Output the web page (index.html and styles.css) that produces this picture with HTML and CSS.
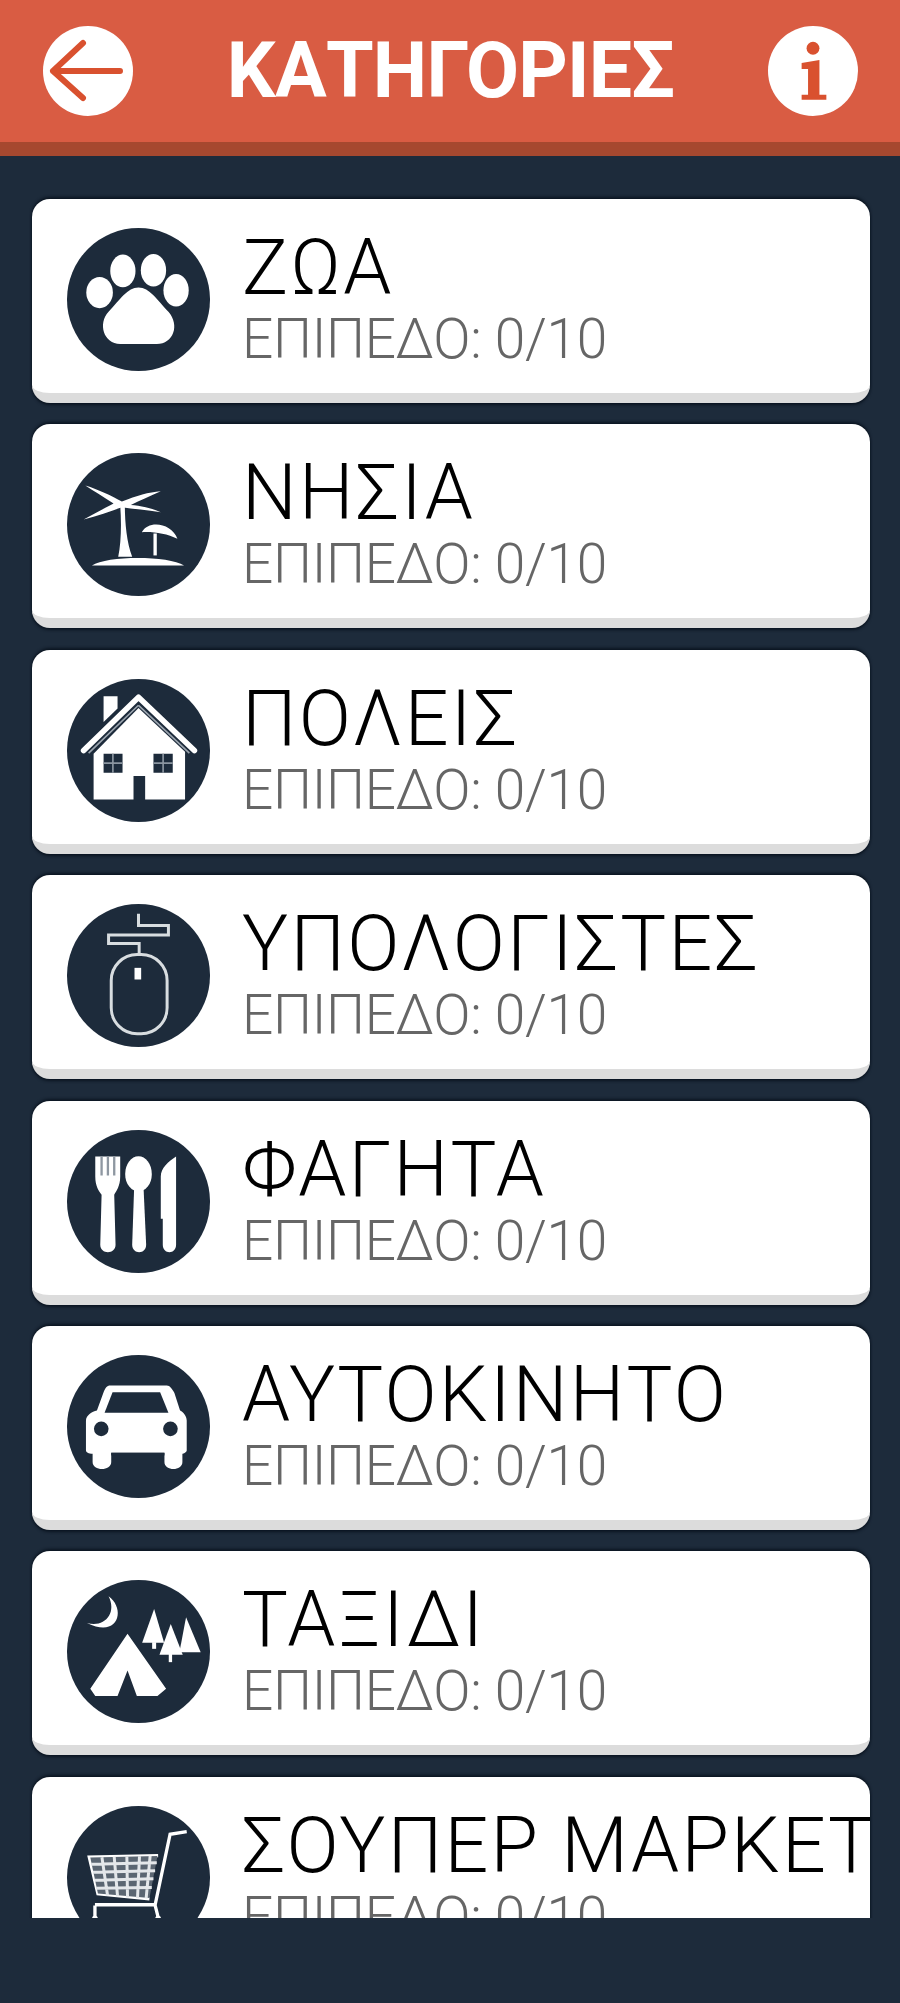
FILE: index.html
```html
<!DOCTYPE html>
<html lang="el">
<head>
<meta charset="utf-8">
<title>ΚΑΤΗΓΟΡΙΕΣ</title>
<link rel="stylesheet" href="styles.css">
</head>
<body>
<header class="topbar">
  <svg class="round-btn" viewBox="0 0 90 92"><circle cx="45" cy="46" r="45" fill="#fff"/><path class="arrow" d="M40 18 L10 46 L40 73 M10 46 H77"/></svg>
  <h1 class="page-title">ΚΑΤΗΓΟΡΙΕΣ</h1>
  <svg class="round-btn" viewBox="17 25 91 92"><circle cx="62.5" cy="71" r="45.5" fill="#fff"/><circle cx="62.5" cy="48" r="6.5" fill="#d9512f"/><path fill="#d9512f" d="M51 63 L69 60 V95 H76 V100 H51 V95 H57.500 V69 H51Z"/></svg>
</header>
<main class="list">
  <section class="card">
    <svg class="icon" viewBox="80 53 430 430"><circle cx="295" cy="268" r="215" class="disc"/><g class="w"><ellipse cx="178" cy="247" rx="40" ry="47"/><ellipse cx="248" cy="182" rx="38" ry="49"/><ellipse cx="340" cy="180" rx="38" ry="49"/><ellipse cx="408" cy="240" rx="38" ry="49"/><path d="M295 232 C262 232 240 268 205 305 C172 340 190 402 240 402 L350 402 C400 402 420 345 385 305 C350 268 328 232 295 232Z"/></g></svg>
    <div class="text"><h2 class="name">ΖΩΑ</h2><p class="level">ΕΠΙΠΕΔΟ: 0/10</p></div>
  </section>
  <section class="card">
    <svg class="icon" viewBox="80 40 430 430"><circle cx="295" cy="255" r="215" class="disc"/><g class="w"><path d="M135 138 C175 150 215 170 245 186 C290 168 325 158 362 155 C330 170 300 182 272 196 C300 198 335 205 362 218 C320 212 280 208 245 203 C210 215 170 230 130 240 C165 220 195 205 220 192 C190 172 160 155 135 138Z"/><path d="M240 198 H254 C254 250 260 310 276 352 H234 C243 310 244 250 240 198Z"/><path d="M155 378 C200 348 385 348 432 378Z"/><path d="M305 278 C325 240 395 250 412 298 C380 282 340 276 305 278Z"/><rect x="340" y="282" width="10" height="66"/></g></svg>
    <div class="text"><h2 class="name">ΝΗΣΙΑ</h2><p class="level">ΕΠΙΠΕΔΟ: 0/10</p></div>
  </section>
  <section class="card">
    <svg class="icon" viewBox="80 53 430 430"><circle cx="295" cy="268" r="215" class="disc"/><g class="w"><path d="M190 105 H232 V142 L190 182Z"/><path d="M160 278 L295 140 L435 272 V415 H160Z"/></g><path d="M130 268 L295 108 L463 268" class="roof"/><path d="M295 132 L145 276 M295 132 L448 276" class="eave"/><path d="M190 278 H247 V335 H190Z M340 278 H398 V335 H340Z M280 345 H315 V420 H280Z" class="d"/><path d="M218 278 V335 M190 306 H247 M369 278 V335 M340 306 H398" class="pane"/></svg>
    <div class="text"><h2 class="name">ΠΟΛΕΙΣ</h2><p class="level">ΕΠΙΠΕΔΟ: 0/10</p></div>
  </section>
  <section class="card">
    <svg class="icon" viewBox="80 53 430 430"><circle cx="295" cy="268" r="215" class="disc"/><g class="wire"><rect x="213" y="205" width="168" height="238" rx="78"/><path d="M295 82 V118 H385 V146 H205 V172 H297 V205"/></g><rect x="283" y="245" width="20" height="35" class="w"/></svg>
    <div class="text"><h2 class="name">ΥΠΟΛΟΓΙΣΤΕΣ</h2><p class="level">ΕΠΙΠΕΔΟ: 0/10</p></div>
  </section>
  <section class="card">
    <svg class="icon" viewBox="80 55 430 430"><circle cx="295" cy="270" r="215" class="disc"/><g class="w"><path d="M165 135 H240 V195 C240 225 228 238 222 250 L226 400 C226 430 180 430 180 400 L184 250 C176 238 165 225 165 195Z"/><ellipse cx="295" cy="187" rx="40" ry="53"/><path d="M282 225 H310 L318 400 C318 430 276 430 276 400Z"/><path d="M408 135 V400 C408 430 368 430 368 400 V322 H362 V195 C362 170 385 150 408 135Z"/></g><path class="tines" d="M184 135 V192 M203 135 V192 M222 135 V192"/></svg>
    <div class="text"><h2 class="name">ΦΑΓΗΤΑ</h2><p class="level">ΕΠΙΠΕΔΟ: 0/10</p></div>
  </section>
  <section class="card">
    <svg class="icon" viewBox="85 58 430 430"><circle cx="300" cy="273" r="215" class="disc"/><path class="w" d="M215 150 H385 C395 150 400 160 408 172 L425 225 C432 228 445 240 445 255 V345 C445 350 435 355 432 355 V380 C432 408 378 408 378 380 V352 H218 V380 C218 408 162 408 162 380 V355 C150 355 142 350 142 345 V255 C142 240 160 228 175 225 L195 170 C200 158 205 150 215 150Z"/><path class="d" d="M222 170 H365 L390 232 H198Z"/><circle class="d" cx="188" cy="280" r="22"/><circle class="d" cx="396" cy="280" r="22"/><rect class="d" x="218" y="352" width="160" height="8"/></svg>
    <div class="text"><h2 class="name">ΑΥΤΟΚΙΝΗΤΟ</h2><p class="level">ΕΠΙΠΕΔΟ: 0/10</p></div>
  </section>
  <section class="card">
    <svg class="icon" viewBox="80 73 430 430"><circle cx="295" cy="288" r="215" class="disc"/><g class="w"><path d="M205 122 C258 160 235 250 140 202 C190 218 232 175 205 122Z"/><path d="M262 235 L378 400 L352 422 H290 L262 345 L232 422 H165 L150 400Z"/><path d="M342 160 L372 262 H306Z"/><rect x="336" y="260" width="12" height="20"/><path d="M392 205 L428 298 H358Z"/><rect x="386" y="295" width="10" height="25"/><path d="M438 185 L482 290 H418Z"/></g></svg>
    <div class="text"><h2 class="name">ΤΑΞΙΔΙ</h2><p class="level">ΕΠΙΠΕΔΟ: 0/10</p></div>
  </section>
  <section class="card">
    <svg class="icon" viewBox="80 53 430 430"><circle cx="295" cy="268" r="215" class="disc"/><g class="wire cart"><path d="M440 130 L390 138 L345 350 H164 M354 202 L147 207 L173 317 L328 332 M164 352 V387 M345 352 L354 387"/></g><path class="basket" d="M150 208 L352 203 L328 330 L173 316Z"/><path class="grid" d="M153 228 L350 224 M158 252 L345 248 M163 276 L340 272 M168 300 L335 298 M185 207 L202 322 M222 206 L232 325 M260 205 L262 328 M298 204 L292 330 M330 203 L318 331"/><circle class="w" cx="164" cy="392" r="9"/><circle class="w" cx="354" cy="392" r="9"/></svg>
    <div class="text"><h2 class="name">ΣΟΥΠΕΡ ΜΑΡΚΕΤ</h2><p class="level">ΕΠΙΠΕΔΟ: 0/10</p></div>
  </section>
</main>
</body>
</html>
```

FILE: styles.css
```css
* { box-sizing: border-box; }
html, body { margin: 0; padding: 0; }
body {
  height: 2003px;
  overflow: hidden;
  background: #1d2b3b;
  font-family: Roboto, "Noto Sans", sans-serif;
}
.topbar {
  height: 156px;
  padding: 0 42px 0 43px;
  display: flex;
  align-items: center;
  justify-content: space-between;
  background: #d95c43;
  border-bottom: 14px solid #a6482f;
  filter: blur(.7px);
}
.round-btn { width: 90px; height: 92px; flex: none; }
.arrow { fill: none; stroke: #d9512f; stroke-width: 6; stroke-linecap: round; stroke-linejoin: round; }
.page-title {
  margin: 0;
  color: #fff;
  font-size: 77px;
  font-weight: 700;
  letter-spacing: -.8px;
  line-height: 92px;
}
.list {
  height: 1762px;
  padding: 43px 30px 0 32px;
  overflow: hidden;
  display: flex;
  flex-direction: column;
  gap: 21.4px;
  filter: blur(.6px);
}
.card {
  flex: none;
  height: 204px;
  padding: 29px 0 0 35px;
  display: flex;
  gap: 32px;
  background: #fff;
  border-radius: 18px;
  border-bottom: 10px solid #dcdcdc;
  box-shadow: 0 -2px 3px #0b1521, 0 2px 3px #0b1521;
  overflow: hidden;
}
.icon { width: 143px; height: 143px; flex: none; }
.disc { fill: #1d2b3b; }
.w { fill: #fff; }
.d { fill: #1d2b3b; }
.roof { fill: none; stroke: #fff; stroke-width: 17; stroke-linecap: round; stroke-linejoin: round; }
.eave { fill: none; stroke: #9aa3ad; stroke-width: 5; }
.pane { fill: none; stroke: #8b95a0; stroke-width: 5; }
.tines { fill: none; stroke: #8e97a1; stroke-width: 7; }
.wire { fill: none; stroke: #d8dde0; stroke-width: 9; }
.cart { stroke: #fff; stroke-width: 10; }
.basket { fill: #5b6672; }
.grid { fill: none; stroke: #e4e7ea; stroke-width: 9; }
.text { min-width: 0; white-space: nowrap; }
.name {
  margin: 0;
  color: #000;
  font-size: 77px;
  font-weight: 300;
  letter-spacing: 2.3px;
  line-height: 80px;
}
.level {
  margin: 0;
  padding-top: 1px;
  color: #666;
  font-size: 55px;
  font-weight: 300;
  letter-spacing: -.3px;
  line-height: 60px;
}
```
